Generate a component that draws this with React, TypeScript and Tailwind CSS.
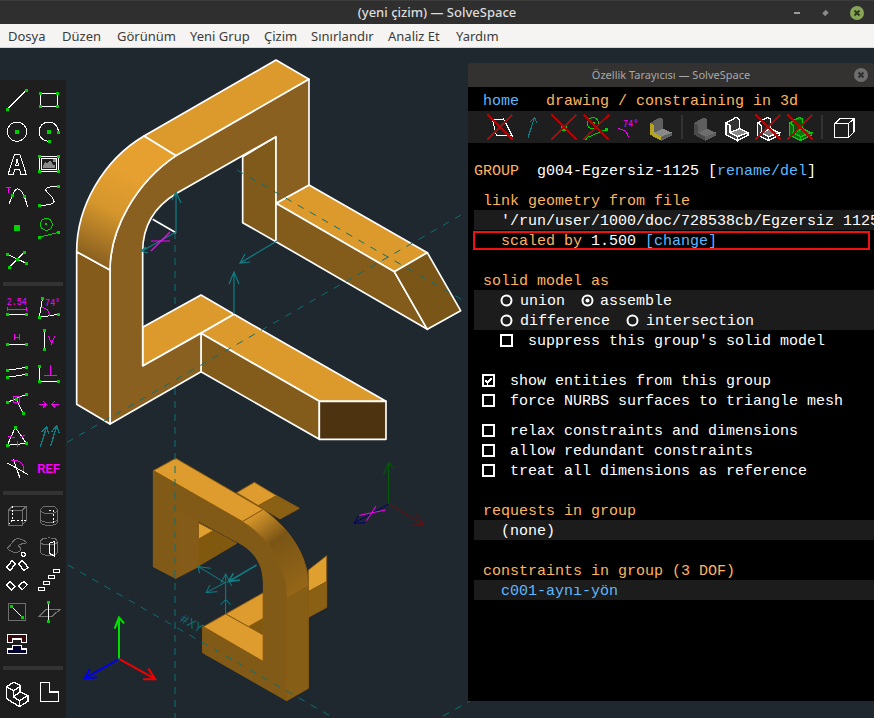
import type { ReactNode } from 'react';

const MENUS = [
  { label: 'Dosya', cls: 'w-[54px]' },
  { label: 'Düzen', cls: 'w-[55px]' },
  { label: 'Görünüm', cls: 'w-[73px]' },
  { label: 'Yeni Grup', cls: 'w-[74px]' },
  { label: 'Çizim', cls: 'w-[47px]' },
  { label: 'Sınırlandır', cls: 'w-[77px]' },
  { label: 'Analiz Et', cls: 'w-[68px]' },
  { label: 'Yardım', cls: 'w-[50px]' },
];

const GREEN = '#00d000';
const MAG = '#ff00ff';
const TEAL = '#0f7f86';
const DASH = '#0e6e72';
const GREY = '#6f6f6f';
const MONO = '"Liberation Mono", monospace';

// icons are traced in 3x coordinates, so each viewBox is a 96 unit cell
function Ico({ vb, children }: { vb: string; children: ReactNode }) {
  return (
    <svg className="overflow-visible" width={32} height={32} viewBox={vb} fill="none" stroke="#fff" strokeWidth={3} shapeRendering="crispEdges">
      {children}
    </svg>
  );
}

function Sq({ x, y, s = 9 }: { x: number; y: number; s?: number }) {
  return <rect x={x - s / 2} y={y - s / 2} width={s} height={s} fill={GREEN} stroke="none" />;
}

function Cross({ x, y }: { x: number; y: number }) {
  return <path d={`M${x - 38},${y - 38} L${x + 38},${y + 37} M${x + 38},${y - 38} L${x - 38},${y + 37}`} stroke="#a80808" strokeWidth={6} />;
}

function LShape({ x, y, face, side, top, line }: { x: number; y: number; face: string; side: string; top: string; line?: string }) {
  const stroke = line ?? 'none';
  return (
    <g transform={`translate(${x} ${y})`} stroke={stroke} strokeWidth={line ? 4 : 0}>
      <path d="M4,21 L34,4 L44,10 L44,38 L70,50 L70,58 L38,74 L4,56 Z" fill={side} />
      <path d="M4,21 L16,28 L16,50 L38,62 L38,74 L4,56 Z" fill={face} />
      <path d="M16,50 L44,38 L70,50 L38,62 Z" fill={top} />
    </g>
  );
}

function Toolbar() {
  return (
    <div className="absolute left-0 top-[32px] bottom-0 w-[66px] bg-[#1e1e1e] pl-[1px] pt-1">
      <div className="grid grid-cols-[32px_32px]">
        <Ico vb="3 12 96 96"><path d="M22,88 L79,31" /><Sq x={22} y={88} /><Sq x={79} y={31} /></Ico>
        <Ico vb="99 12 96 96"><rect x={121} y={40} width={51} height={39} /><Sq x={121} y={40} /><Sq x={172} y={40} /><Sq x={121} y={79} /><Sq x={172} y={79} /></Ico>
        <Ico vb="3 108 96 96"><circle cx={51} cy={155} r={29} /><Sq x={51} y={155} s={12} /></Ico>
        <Ico vb="99 108 96 96"><path d="M175,157 A29,29 0 1 0 148,184" /><Sq x={147} y={155} s={12} /><Sq x={175} y={157} /><Sq x={148} y={184} /></Ico>
        <Ico vb="3 204 96 96"><path d="M24,284 L43,224 L60,224 L79,284 L63,284 L59,268 L44,268 L40,284 Z M47,256 L51,238 L56,256 Z" /></Ico>
        <Ico vb="99 204 96 96">
          <rect x={118} y={230} width={57} height={43} />
          <rect x={124} y={236} width={45} height={31} />
          <path d="M127,264 L135,246 L141,252 L150,240 L158,252 L166,258 L166,264 Z" fill="#8a8a8a" stroke="none" />
          <rect x={160} y={238} width={7} height={7} fill="#8a8a8a" stroke="none" />
          <Sq x={118} y={230} /><Sq x={175} y={230} /><Sq x={118} y={273} /><Sq x={175} y={273} />
        </Ico>
        <Ico vb="3 300 96 96">
          <path d="M27,372 L37,347 Q52,305 73,349 L83,380" />
          <path d="M19,322 H32 M25,322 V339" stroke={MAG} strokeWidth={4} />
          <Sq x={37} y={347} /><Sq x={73} y={349} />
        </Ico>
        <Ico vb="99 300 96 96">
          <path d="M118,376 C170,376 170,365 150,345 C120,320 150,320 175,319" />
          <Sq x={118} y={376} /><Sq x={175} y={319} />
        </Ico>
        <Ico vb="3 396 96 96"><Sq x={51} y={443} s={18} /></Ico>
        <Ico vb="99 396 96 96">
          <circle cx={139} cy={433} r={18} stroke={GREEN} />
          <rect x={136} y={430} width={6} height={6} fill={GREEN} stroke="none" />
          <path d="M118,472 L175,457" stroke={GREEN} />
          <Sq x={118} y={472} /><Sq x={175} y={457} />
        </Ico>
        <Ico vb="3 492 96 96">
          <path d="M22,523 L79,550 M28,562 L73,517" />
          <Sq x={22} y={523} /><Sq x={79} y={550} /><Sq x={28} y={562} /><Sq x={73} y={517} /><Sq x={52} y={538} />
        </Ico>
      </div>

      <div className="mt-[6px] ml-[2px] h-1 w-[60px] bg-[#333333]" />

      <div className="mt-[6px] grid grid-cols-[32px_32px]">
        <Ico vb="3 21 96 96">
          <text x={20} y={60} fill={MAG} stroke="none" fontSize={31} fontFamily={MONO} textLength={60} lengthAdjust="spacingAndGlyphs">2.54</text>
          <path d="M22,72 H79 M22,66 V78 M79,66 V78" stroke={MAG} />
          <path d="M22,88 H79" /><Sq x={22} y={88} /><Sq x={79} y={88} />
        </Ico>
        <Ico vb="99 21 96 96">
          <text x={134} y={62} fill={MAG} stroke="none" fontSize={31} fontFamily={MONO} textLength={47} lengthAdjust="spacingAndGlyphs">74°</text>
          <path d="M127,41 L118,97 L175,88" />
          <path d="M124,68 C140,68 148,78 148,92" stroke={MAG} />
          <Sq x={127} y={41} /><Sq x={118} y={97} /><Sq x={175} y={88} />
        </Ico>
        <Ico vb="3 117 96 96">
          <path d="M43,147 V166 M59,147 V166 M43,157 H59" stroke={MAG} />
          <path d="M22,178 H79" /><Sq x={22} y={178} /><Sq x={79} y={178} />
        </Ico>
        <Ico vb="99 117 96 96">
          <path d="M146,154 L155,176 L164,154" stroke={MAG} />
          <path d="M133,136 V193" /><Sq x={133} y={136} /><Sq x={133} y={193} />
        </Ico>
        <Ico vb="3 213 96 96">
          <path d="M22,256 L79,247 M22,277 L79,268" />
          <Sq x={22} y={256} /><Sq x={79} y={247} /><Sq x={22} y={277} /><Sq x={79} y={268} />
        </Ico>
        <Ico vb="99 213 96 96">
          <path d="M152,240 V270 M133,270 H171" stroke={MAG} />
          <path d="M118,244 V289 H175" />
          <Sq x={118} y={244} /><Sq x={118} y={289} /><Sq x={175} y={289} />
        </Ico>
        <Ico vb="3 309 96 96">
          <path d="M22,352 L79,328 M50,345 L70,385" />
          <rect x={40} y={334} width={19} height={19} stroke={MAG} />
          <Sq x={22} y={352} /><Sq x={79} y={328} /><Sq x={70} y={385} /><Sq x={50} y={343} />
        </Ico>
        <Ico vb="99 309 96 96">
          <path d="M117,358 H140 M130,349 L140,358 L130,367 M177,358 H155 M165,349 L155,358 L165,367" stroke={MAG} />
        </Ico>
        <Ico vb="3 405 96 96">
          <path d="M46,427 L22,481 L79,475 Z" />
          <path d="M24,453 L44,458 M60,458 L76,449 M52,468 V486" stroke={MAG} />
          <Sq x={46} y={427} /><Sq x={22} y={481} /><Sq x={79} y={475} />
        </Ico>
        <Ico vb="99 405 96 96">
          <path d="M121,485 L140,425 M124,442 L140,425 L146,446 M152,483 L170,422 M155,440 L170,422 L177,444" stroke={TEAL} strokeWidth={4} />
        </Ico>
        <Ico vb="3 501 96 96">
          <path d="M20,533 L83,568 M40,522 L60,580" />
          <path d="M33,528 C55,520 72,535 72,558" stroke={MAG} />
        </Ico>
        <Ico vb="99 501 96 96">
          <text x={112} y={565} fill={MAG} stroke="none" fontSize={41} fontWeight={700} fontFamily='"Liberation Sans", sans-serif' textLength={68} lengthAdjust="spacingAndGlyphs">REF</text>
        </Ico>
      </div>

      <div className="mt-[7px] ml-[2px] h-1 w-[60px] bg-[#333333]" />

      <div className="mt-1 grid grid-cols-[32px_32px]">
        <Ico vb="3 27 96 96">
          <path d="M24,62 H66 V105 H24 Z M24,62 L38,48 H80 V90 L66,105 M66,62 L80,48" stroke={GREY} />
          <path d="M38,48 V90 H80 M38,90 L24,105" stroke="#fff" strokeDasharray="6 5" />
        </Ico>
        <Ico vb="99 27 96 96">
          <path d="M122,60 C122,45 172,45 172,60 V95 C172,110 122,110 122,95 Z M122,60 C122,74 172,74 172,60 M122,88 C122,100 172,100 172,88" stroke={GREY} />
          <path d="M148,62 H160 V100" stroke="#fff" strokeDasharray="6 5" />
        </Ico>
        <Ico vb="3 123 96 96">
          <path d="M22,175 C40,160 38,148 50,146 C60,144 74,152 80,158 C70,165 58,158 54,168 C62,172 66,178 60,184 C48,190 30,186 22,175 Z" stroke={GREY} />
          <circle cx={70} cy={193} r={6} strokeWidth={4} />
        </Ico>
        <Ico vb="99 123 96 96">
          <path d="M122,155 C122,140 172,140 172,155 V185 C172,200 122,200 122,185 Z M122,155 C122,168 172,168 172,155" stroke={GREY} />
          <path d="M148,160 L163,154 V198 L148,190 Z" />
        </Ico>
        <Ico vb="3 219 96 96">
          <path d="M20,232 L36,212 L46,222 L30,242 Z M56,222 L66,210 L84,232 L72,242 Z M20,285 L30,274 L46,290 L34,300 Z M56,287 L72,274 L82,284 L66,300 Z" strokeWidth={4} />
        </Ico>
        <Ico vb="99 219 96 96">
          <path d="M115,292 H133 V301 H115 Z M131,274 H149 V283 H131 Z M145,256 H163 V265 H145 Z M160,238 H178 V247 H160 Z" strokeWidth={4} />
        </Ico>
        <Ico vb="3 315 96 96">
          <rect x={25} y={340} width={52} height={52} stroke={GREY} strokeWidth={4} />
          <path d="M34,349 L68,382" /><Sq x={34} y={349} s={10} /><Sq x={68} y={382} s={10} />
        </Ico>
        <Ico vb="99 315 96 96">
          <path d="M115,380 L140,358 H180 L155,380 Z" stroke={GREY} strokeWidth={4} />
          <path d="M145,337 V394" /><Sq x={145} y={337} s={10} /><Sq x={145} y={394} s={10} />
        </Ico>
        <Ico vb="3 411 96 96">
          <path d="M22,433 H80 V457 H65 V447 H37 V457 H22 Z" fill="#3a0808" strokeWidth={4} />
          <path d="M37,466 H65 V477 H80 V491 H22 V477 H37 Z" fill="#00002e" strokeWidth={4} />
        </Ico>
        <div />
      </div>

      <div className="mt-[7px] ml-[2px] h-1 w-[60px] bg-[#333333]" />

      <div className="mt-[7px] grid grid-cols-[32px_32px]">
        <Ico vb="3 561 96 96">
          <path d="M20,590 L42,576 L60,586 V606 L84,617 V634 L58,650 L20,626 Z M20,590 L40,602 V620 L58,632 V650 M40,602 L60,590 M40,620 L60,606 L84,617 L58,632" strokeWidth={4} />
        </Ico>
        <Ico vb="99 561 96 96"><path d="M121,577 H148 V606 H175 V634 H121 Z" strokeWidth={4} /></Ico>
      </div>
    </div>
  );
}

function UpperModel() {
  return (
    <g transform="translate(60 50) scale(0.33333)" stroke="#fff" strokeWidth={5} strokeLinejoin="round">
      <polygon points="548,320 648,260 648,575 548,518" fill="#7f5a1a" />
      <polygon points="648,460 747,405 1102,608 1003,665" fill="#dc9a2c" />
      <polygon points="648,460 1003,665 1102,838 648,575" fill="#835b1b" />
      <polygon points="1003,665 1102,608 1202,782 1102,838" fill="#7a5518" />
      <polygon points="248,832 423,735 522,793 248,948" fill="#dc9a2c" />
      <polygon points="423,850 522,793 978,1054 778,1054" fill="#dc9a2c" />
      <polygon points="423,850 778,1054 778,1168 423,965" fill="#835b1b" />
      <rect x={778} y={1054} width={200} height={114} fill="#4d3310" />
      <polygon points="648,30 747,88 348,317 252,258" fill="#dc9a2c" />
      <path d="M747,88 V405 L648,460 V260 L350,430 C275,475 248,540 248,605 V948 L423,850 V965 L150,1122 V660 C150,540 225,400 348,317 Z" fill="#8a6020" />
      <polygon points="50,605 150,660 150,1122 50,1063" fill="#845b1b" />
      <path d="M252,258 L348,317 C225,400 150,540 150,660 L50,605 C50,470 130,330 252,258 Z" fill="url(#bend)" />
      <path d="M278,508 L348,548" fill="none" />
    </g>
  );
}

function LowerModel() {
  return (
    <g transform="translate(60 440) scale(0.33333)" stroke="#8b5c12" strokeWidth={3} strokeLinejoin="round">
      <polygon points="530,158 583,127 650,167 595,197" fill="#df9c2e" />
      <polygon points="595,197 650,167 718,205 660,237" fill="#8a6015" />
      <polygon points="745,390 800,347 800,425 745,455" fill="#e0a030" />
      <polygon points="745,455 800,425 800,502 745,532" fill="#8a6015" />
      <polygon points="415,248 460,272 415,298" fill="#e0a030" />
      <polygon points="415,298 460,272 530,310 415,378" fill="#80590f" />
      <polygon points="497,522 610,458 610,585" fill="#df9c2e" />
      <polygon points="565,560 610,535 610,585" fill="#80590f" />
      <polygon points="430,560 497,522 610,585 610,665" fill="#df9c2e" />
      <polygon points="347,207 415,245 415,380 347,415" fill="#845b18" />
      <polygon points="347,55 280,92 547,245 610,208" fill="#df9c2e" />
      <path d="M280,92 L547,245 C620,290 680,370 680,475 V782 L428,638 V560 L610,665 V430 C610,370 580,330 530,305 L347,207 V415 L280,380 Z" fill="#805a16" />
      <polygon points="680,475 745,437 745,745 680,782" fill="#875e16" />
      <path d="M547,245 L610,208 C680,260 745,340 745,437 L680,475 C680,370 620,290 547,245 Z" fill="url(#bendLow)" />
    </g>
  );
}

function Scene() {
  return (
    <svg className="absolute inset-0" width={874} height={670} viewBox="0 48 874 670" fill="none">
      <defs>
        {/* gradients resolve in the 3x space of the model groups */}
        <linearGradient id="bend" gradientUnits="userSpaceOnUse" x1="195" y1="360" x2="75" y2="615">
          <stop offset="0" stopColor="#e6a030" />
          <stop offset="0.45" stopColor="#d5962c" />
          <stop offset="1" stopColor="#8c6220" />
        </linearGradient>
        <linearGradient id="bendLow" gradientUnits="userSpaceOnUse" x1="570" y1="225" x2="730" y2="440">
          <stop offset="0" stopColor="#dd9a2c" />
          <stop offset="0.4" stopColor="#7a5516" />
          <stop offset="1" stopColor="#946618" />
        </linearGradient>
      </defs>

      <LowerModel />
      <path d="M175,232 V718" stroke={DASH} strokeWidth={1} strokeDasharray="7 6" />
      <UpperModel />

      {/* workplane lines */}
      <path d="M461,215 L66,443" stroke={DASH} strokeDasharray="7 7" />
      <path d="M237,170 L466,302" stroke={DASH} strokeDasharray="7 7" />
      <path d="M68,565 L332,717" stroke={DASH} strokeDasharray="7 7" />
      <path d="M443,716 L470,701" stroke={DASH} strokeDasharray="7 7" />

      {/* constraint arrows on the upper part */}
      <g stroke={TEAL} strokeWidth={1.2}>
        <path d="M176,232 V193 M172,200 L176,192 L181,203" />
        <path d="M176,232 L142,251 M148,253 L141,251 L146,247" />
        <path d="M277,241 L240,263 M250,262 L240,263 L245,254" />
        <path d="M234,314 V272 M229,284 L234,272 L239,284" />
      </g>
      <path d="M151,241 H170 M151,251 L170,232" stroke={MAG} strokeWidth={1.2} />

      {/* constraint arrows on the lower part */}
      <g transform="translate(60 440) scale(0.33333)" stroke={TEAL} strokeWidth={3} fill="none">
        <path d="M415,380 L495,428 M418,400 L415,380 L452,385" />
        <path d="M495,428 L438,458 M472,455 L438,458 L450,435" />
        <path d="M590,375 L505,425 M540,420 L505,425 L520,400" strokeWidth={5} />
        <path d="M497,400 V520 M482,495 L497,478 L512,495 M482,430 L497,402 L515,438" />
        <text x={350} y={560} transform="rotate(30 385 565)" fill={DASH} stroke="none" fontSize={40} fontFamily={MONO}>#XY</text>
      </g>

      {/* trackball axes */}
      <g transform="translate(60 440) scale(0.33333)" strokeWidth={6}>
        <path d="M177,657 V532 M164,566 L177,532 L192,550" stroke="#00e000" />
        <path d="M177,657 L74,715 M110,712 L74,716 L90,686" stroke="#0000f0" />
        <path d="M177,657 L285,717 M249,718 L286,718 L265,686" stroke="#f00000" />
        <g strokeWidth={3}>
          <path d="M986,192 V70 M971,102 L986,68 L1001,85" stroke="#006400" />
          <path d="M986,192 L884,248 M916,248 L882,250 L895,228" stroke="#00006a" />
          <path d="M986,192 L1088,252 M1052,256 L1090,253 L1070,222" stroke="#6b0f0f" />
          <path d="M898,226 L977,210 M920,242 L948,198" stroke={MAG} />
        </g>
      </g>
    </svg>
  );
}

function Box({ checked }: { checked?: boolean }) {
  return (
    <svg width={13} height={13} viewBox="0 0 13 13" fill="none" stroke="#fff" shapeRendering="crispEdges">
      <rect x={1} y={1} width={11} height={11} strokeWidth={2} />
      {checked && <path d="M3.5,6 L5.5,9 L9.5,4" strokeWidth={2} />}
    </svg>
  );
}

function Radio({ on }: { on?: boolean }) {
  return (
    <svg width={13} height={13} viewBox="0 0 13 13" fill="none" stroke="#fff">
      <circle cx={6.5} cy={6.5} r={5} strokeWidth={2} />
      {on && <circle cx={6.5} cy={6.5} r={2} fill="#fff" stroke="none" />}
    </svg>
  );
}

function Row({ band, className, children }: { band?: boolean; className?: string; children: ReactNode }) {
  return (
    <div className={`relative h-5 overflow-hidden whitespace-pre leading-6 ${band ? 'bg-[#1c1c1c]' : ''} ${className ?? ''}`}>
      {children}
    </div>
  );
}

function CheckRow({ label, checked }: { label: string; checked?: boolean }) {
  return (
    <Row className="flex items-center pl-2 text-white">
      <Box checked={checked} />
      <span className="ml-[15px] translate-y-[2px]">{label}</span>
    </Row>
  );
}

function PanelIcons() {
  return (
    <div className="mt-[1px] flex h-8 items-center bg-[#1e1e1e] pl-4">
      <Ico vb="48 153 96 96"><path d="M73,178 L107,177 L133,228 L85,225 Z" /><Cross x={96} y={202} /></Ico>
      <Ico vb="144 153 96 96"><path d="M180,233 L200,172 M186,186 L200,172 L206,190" stroke={TEAL} /></Ico>
      <Ico vb="240 153 96 96"><Sq x={288} y={204} s={18} /><Cross x={288} y={202} /></Ico>
      <Ico vb="336 153 96 96">
        <circle cx={375} cy={190} r={17} stroke={GREEN} />
        <path d="M352,235 L415,208" stroke={GREEN} /><Sq x={375} y={190} /><Sq x={352} y={235} /><Sq x={415} y={208} />
        <Cross x={385} y={202} />
      </Ico>
      <Ico vb="432 153 96 96">
        <text x={465} y={200} fill={MAG} stroke="none" fontSize={31} fontFamily={MONO} textLength={46} lengthAdjust="spacingAndGlyphs">74°</text>
        <path d="M450,206 C470,206 478,216 482,232" stroke={MAG} />
      </Ico>
      <Ico vb="528 153 96 96">
        <LShape x={542} y={168} face="#b5a520" side="#5f5f5f" top="#8a8a8a" />
      </Ico>
      <div className="flex h-full w-3 items-center justify-center"><div className="h-6 w-[2px] bg-[#333333]" /></div>
      <Ico vb="660 153 96 96"><LShape x={674} y={168} face="#4a4a4a" side="#5e5e5e" top="#6e6e6e" /></Ico>
      <Ico vb="756 153 96 96"><LShape x={770} y={168} face="#444444" side="#333333" top="#8a8a8a" line="#fff" /></Ico>
      <Ico vb="852 153 96 96"><LShape x={864} y={168} face="#333333" side="#222222" top="#777777" line="#fff" /><Cross x={900} y={202} /></Ico>
      <Ico vb="948 153 96 96"><LShape x={960} y={168} face="#0a6a0a" side="#0a500a" top="#0a7a0a" line={GREEN} /><Cross x={996} y={202} /></Ico>
      <div className="flex h-full w-3 items-center justify-center"><div className="h-6 w-[2px] bg-[#333333]" /></div>
      <Ico vb="1080 153 96 96"><path d="M1100,190 H1142 V232 H1100 Z M1100,190 L1118,175 H1158 V216 L1142,232 M1142,190 L1158,175" strokeWidth={4} /></Ico>
    </div>
  );
}

function PropertyBrowser() {
  return (
    <div className="absolute left-[468px] top-[15px] bottom-[17px] flex w-[406px] flex-col overflow-hidden rounded-t-[3px]">
      <div className="relative flex h-6 shrink-0 items-center justify-center bg-[#333231] text-[11px] text-[#a8a8a8]" style={{ fontFamily: '"Noto Sans", sans-serif' }}>
        Özellik Tarayıcısı — SolveSpace
        <svg className="absolute right-[6px] top-[5px]" width={14} height={14} viewBox="0 0 14 14">
          <circle cx={7} cy={7} r={7} fill="#6e6e6e" />
          <path d="M4.5,4.5 L9.5,9.5 M9.5,4.5 L4.5,9.5" stroke="#2f2f2f" strokeWidth={2} />
        </svg>
      </div>
      <div className="flex-1 bg-black pt-[3px] text-[15px] text-white" style={{ fontFamily: MONO }}>
        <Row className="pl-[15px] text-[#ffb45c]"><span className="text-[#5cb8ff]">home</span>{'   drawing / constraining in 3d'}</Row>
        <PanelIcons />
        <div className="mt-[17px] pl-[6px]">
          <Row><span className="text-[#ffb45c]">GROUP</span>{'  g004-Egzersiz-1125 ['}<span className="text-[#5cb8ff]">rename/del</span>]</Row>
          <Row className="mt-[10px] text-[#ffb45c]">{' link geometry from file'}</Row>
          <Row band>{"   '/run/user/1000/doc/728538cb/Egzersiz 1125"}</Row>
          <div className="relative">
            <Row><span className="text-[#ffb45c]">{'   scaled by '}</span>1.500 <span className="text-[#5cb8ff]">[change]</span></Row>
            <div className="absolute -left-[1px] right-[4px] top-[1px] bottom-0 border-2 border-[#f01010]" />
          </div>
          <Row className="mt-5 text-[#ffb45c]">{' solid model as'}</Row>
          <Row band className="flex items-center pl-[26px]">
            <Radio /><span className="ml-[7px] w-[45px] translate-y-[2px]">union</span>
            <span className="ml-4 flex items-center"><Radio on /><span className="ml-[6px] translate-y-[2px]">assemble</span></span>
          </Row>
          <Row band className="flex items-center pl-[26px]">
            <Radio /><span className="ml-[7px] w-[90px] translate-y-[2px]">difference</span>
            <span className="ml-4 flex items-center"><Radio /><span className="ml-[7px] translate-y-[2px]">intersection</span></span>
          </Row>
          <Row className="flex items-center pl-[26px]">
            <Box /><span className="ml-[15px] translate-y-[2px]">suppress this group's solid model</span>
          </Row>
          <div className="mt-5">
            <CheckRow checked label="show entities from this group" />
            <CheckRow label="force NURBS surfaces to triangle mesh" />
          </div>
          <div className="mt-[10px]">
            <CheckRow label="relax constraints and dimensions" />
            <CheckRow label="allow redundant constraints" />
            <CheckRow label="treat all dimensions as reference" />
          </div>
          <Row className="mt-5 text-[#ffb45c]">{' requests in group'}</Row>
          <Row band>{'   (none)'}</Row>
          <Row className="mt-5 text-[#ffb45c]">{' constraints in group (3 DOF)'}</Row>
          <Row band className="text-[#5cb8ff]">{'   c001-aynı-yön'}</Row>
        </div>
      </div>
    </div>
  );
}

export default function App() {
  return (
    <div className="flex h-[718px] w-[874px] flex-col overflow-hidden" style={{ fontFamily: '"Noto Sans", sans-serif' }}>
      <div className="relative flex h-6 shrink-0 items-center justify-center border-t border-[#3c3c3c] bg-[#2f2f2f] pt-[1px] text-[13px] font-medium text-[#dcdcdc]">
        (yeni çizim) — SolveSpace
        <svg className="absolute right-[4px] top-[3px]" width={80} height={18} viewBox="0 0 80 18">
          <path d="M4,9 H10" stroke="#9a9a9a" strokeWidth={2} />
          <path d="M33,7 H38 V11 H33 Z" fill="#8a8a8a" transform="rotate(-45 35.5 9)" />
          <circle cx={67} cy={9} r={7} fill="#87a556" />
          <path d="M64.5,6.5 L69.5,11.5 M69.5,6.5 L64.5,11.5" stroke="#2f3a1c" strokeWidth={2} />
        </svg>
      </div>
      <div className="flex h-6 shrink-0 items-center border-b border-[#d8d6d2] bg-[#f5f4f2] pl-2 pt-[2px] text-[13px] text-[#3c3c3c]">
        {MENUS.map((m) => (
          <div key={m.label} className={`whitespace-nowrap ${m.cls}`}>{m.label}</div>
        ))}
      </div>
      <div className="relative flex-1 bg-[#1f282f]">
        <Scene />
        <Toolbar />
        <PropertyBrowser />
      </div>
    </div>
  );
}
